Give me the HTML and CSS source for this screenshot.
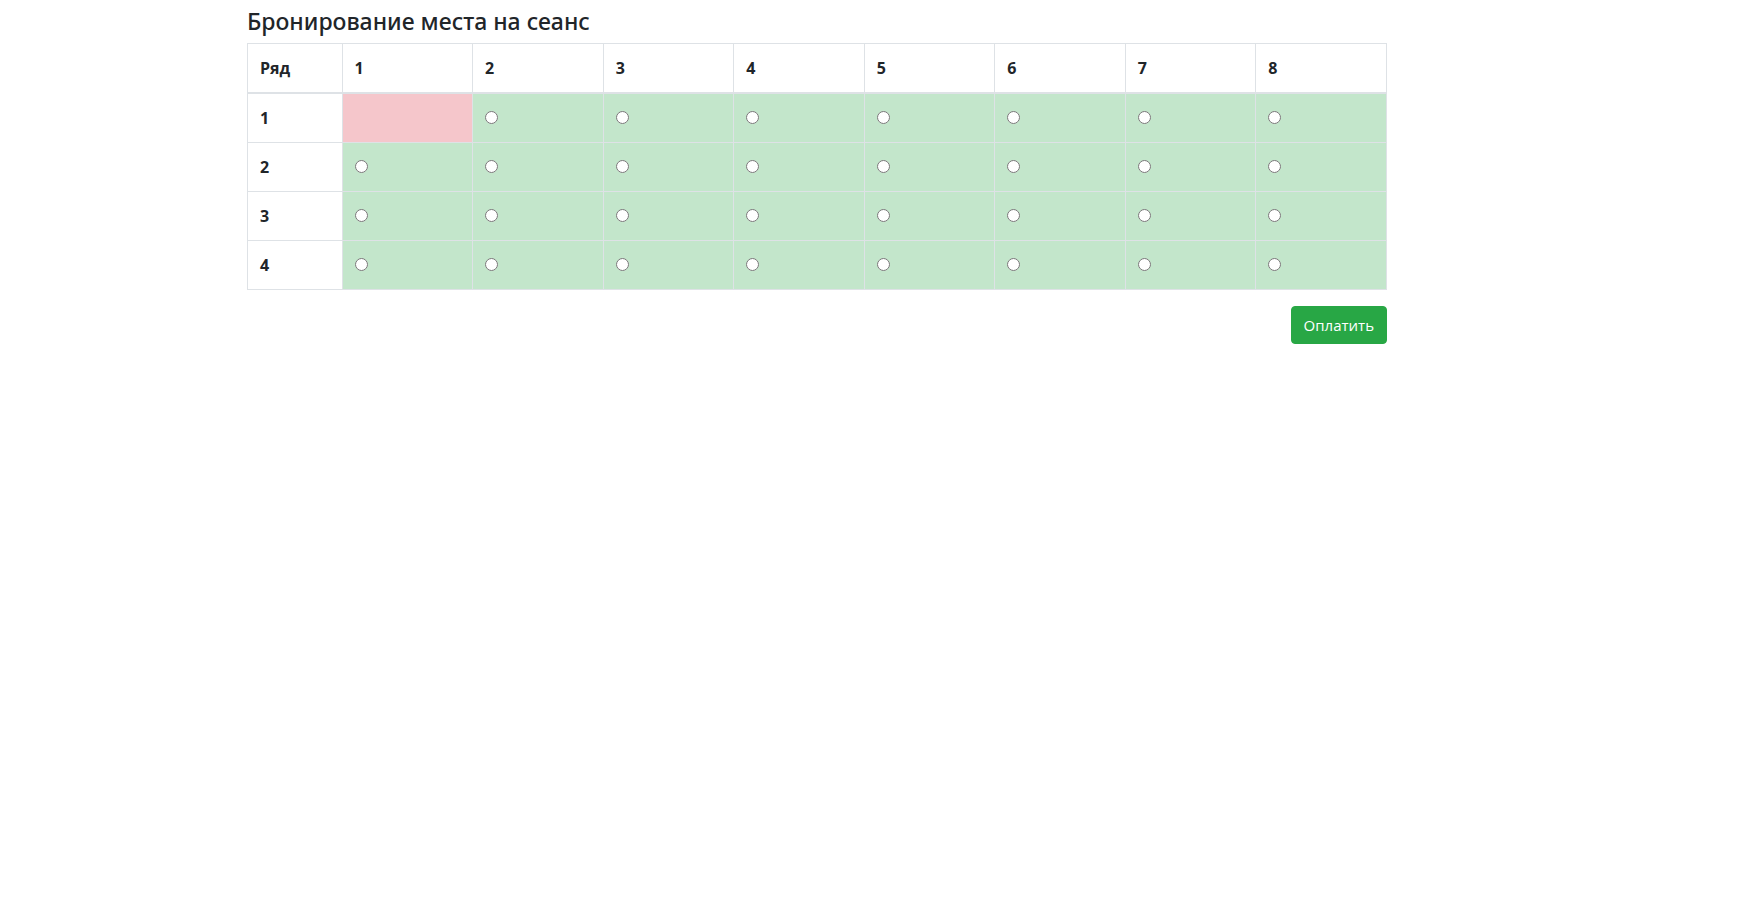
FILE: index.html
```html
<!DOCTYPE html>
<html lang="ru">
<head>
<meta charset="utf-8">
<meta name="viewport" content="width=device-width, initial-scale=1">
<title>Бронирование места на сеанс</title>
<link rel="stylesheet" href="styles.css">
</head>
<body>
<main class="page">
<form class="booking">
<h1 class="title">Бронирование места на сеанс</h1>
<table class="hall">
<thead>
<tr><th class="row-head" scope="col">Ряд</th><th scope="col">1</th><th scope="col">2</th><th scope="col">3</th><th scope="col">4</th><th scope="col">5</th><th scope="col">6</th><th scope="col">7</th><th scope="col">8</th></tr>
</thead>
<tbody>
<tr><th scope="row">1</th>
<td class="taken"></td>
<td class="free"><input type="radio" name="place" value="1-2" aria-label="Ряд 1, место 2"></td>
<td class="free"><input type="radio" name="place" value="1-3" aria-label="Ряд 1, место 3"></td>
<td class="free"><input type="radio" name="place" value="1-4" aria-label="Ряд 1, место 4"></td>
<td class="free"><input type="radio" name="place" value="1-5" aria-label="Ряд 1, место 5"></td>
<td class="free"><input type="radio" name="place" value="1-6" aria-label="Ряд 1, место 6"></td>
<td class="free"><input type="radio" name="place" value="1-7" aria-label="Ряд 1, место 7"></td>
<td class="free"><input type="radio" name="place" value="1-8" aria-label="Ряд 1, место 8"></td></tr>
<tr><th scope="row">2</th>
<td class="free"><input type="radio" name="place" value="2-1" aria-label="Ряд 2, место 1"></td>
<td class="free"><input type="radio" name="place" value="2-2" aria-label="Ряд 2, место 2"></td>
<td class="free"><input type="radio" name="place" value="2-3" aria-label="Ряд 2, место 3"></td>
<td class="free"><input type="radio" name="place" value="2-4" aria-label="Ряд 2, место 4"></td>
<td class="free"><input type="radio" name="place" value="2-5" aria-label="Ряд 2, место 5"></td>
<td class="free"><input type="radio" name="place" value="2-6" aria-label="Ряд 2, место 6"></td>
<td class="free"><input type="radio" name="place" value="2-7" aria-label="Ряд 2, место 7"></td>
<td class="free"><input type="radio" name="place" value="2-8" aria-label="Ряд 2, место 8"></td></tr>
<tr><th scope="row">3</th>
<td class="free"><input type="radio" name="place" value="3-1" aria-label="Ряд 3, место 1"></td>
<td class="free"><input type="radio" name="place" value="3-2" aria-label="Ряд 3, место 2"></td>
<td class="free"><input type="radio" name="place" value="3-3" aria-label="Ряд 3, место 3"></td>
<td class="free"><input type="radio" name="place" value="3-4" aria-label="Ряд 3, место 4"></td>
<td class="free"><input type="radio" name="place" value="3-5" aria-label="Ряд 3, место 5"></td>
<td class="free"><input type="radio" name="place" value="3-6" aria-label="Ряд 3, место 6"></td>
<td class="free"><input type="radio" name="place" value="3-7" aria-label="Ряд 3, место 7"></td>
<td class="free"><input type="radio" name="place" value="3-8" aria-label="Ряд 3, место 8"></td></tr>
<tr><th scope="row">4</th>
<td class="free"><input type="radio" name="place" value="4-1" aria-label="Ряд 4, место 1"></td>
<td class="free"><input type="radio" name="place" value="4-2" aria-label="Ряд 4, место 2"></td>
<td class="free"><input type="radio" name="place" value="4-3" aria-label="Ряд 4, место 3"></td>
<td class="free"><input type="radio" name="place" value="4-4" aria-label="Ряд 4, место 4"></td>
<td class="free"><input type="radio" name="place" value="4-5" aria-label="Ряд 4, место 5"></td>
<td class="free"><input type="radio" name="place" value="4-6" aria-label="Ряд 4, место 6"></td>
<td class="free"><input type="radio" name="place" value="4-7" aria-label="Ряд 4, место 7"></td>
<td class="free"><input type="radio" name="place" value="4-8" aria-label="Ряд 4, место 8"></td></tr>
</tbody>
</table>
<div class="actions">
<button class="pay" type="submit">Оплатить</button>
</div>
</form>
</main>
</body>
</html>
```
FILE: styles.css
```css
*, *::before, *::after {
  box-sizing: border-box;
}

body {
  margin: 0;
  background: #fff;
  color: #212529;
  font: 400 16px/24px "Segoe UI", "Open Sans", "Noto Sans", sans-serif;
}

.page {
  display: grid;
  grid-template-columns: 247fr minmax(0, 1140px) 360fr;
  padding-top: 7px;
}

.booking {
  grid-column: 2;
}

.title {
  margin: 0 0 8px;
  font-family: "Segoe UI", "Noto Sans", sans-serif;
  font-size: 23px;
  font-weight: 500;
  line-height: 28px;
}

.hall {
  width: 100%;
  margin-bottom: 16px;
  border: 1px solid #dee2e6;
  border-collapse: collapse;
  table-layout: fixed;
}

.hall th,
.hall td {
  height: 49px;
  padding: 12px;
  border: 1px solid #dee2e6;
  text-align: left;
  vertical-align: top;
}

.hall thead th {
  border-bottom-width: 2px;
  vertical-align: bottom;
}

.hall .row-head {
  width: 8.3%;
}

.hall .free {
  background: #c3e6cb;
}

.hall .taken {
  background: #f5c6cb;
}

.hall input {
  width: 13px;
  height: 13px;
  margin: 0;
}

.actions {
  display: flex;
  justify-content: flex-end;
}

.pay {
  padding: 6px 12px;
  border: 1px solid #28a745;
  border-radius: 4px;
  background: #28a745;
  color: #fff;
  font-family: inherit;
  font-size: 15px;
  line-height: 24px;
  cursor: pointer;
}
```
